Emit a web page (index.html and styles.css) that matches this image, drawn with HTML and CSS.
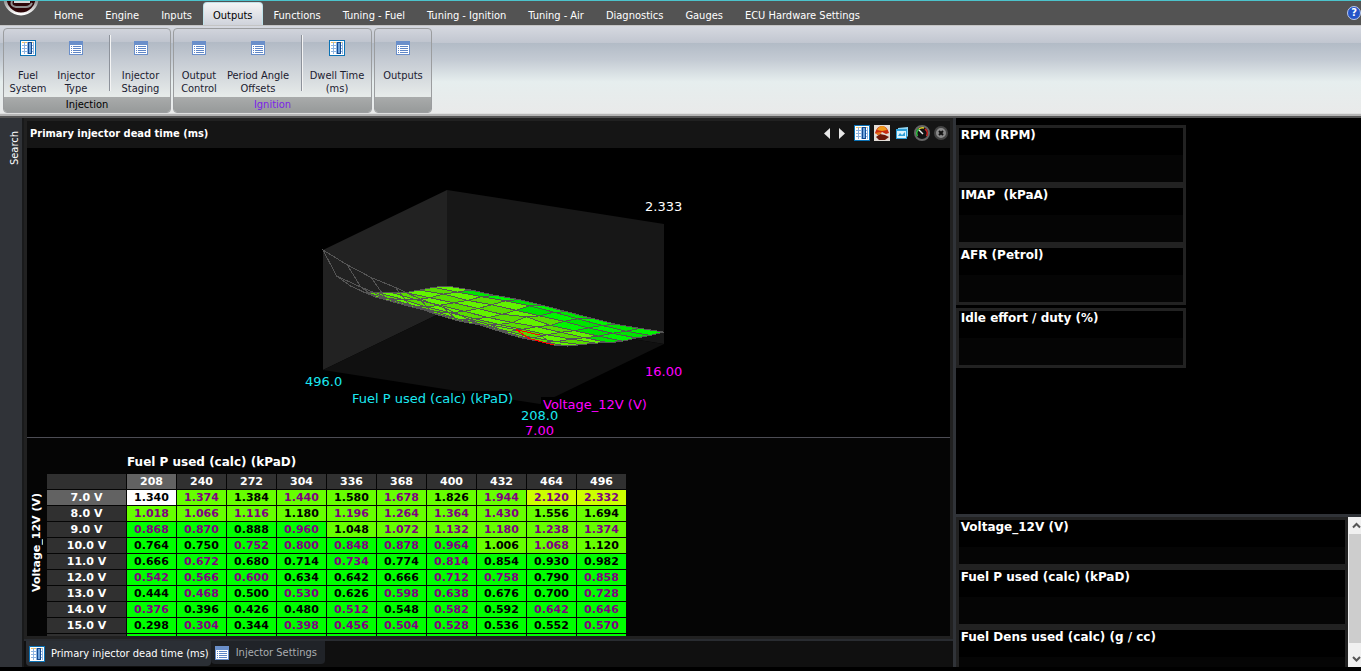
FILE: index.html
```
<!DOCTYPE html>
<html lang="en">
<head>
  <meta charset="UTF-8">
  <title>Primary injector dead time (ms)</title>
  <link rel="stylesheet" href="styles.css">
</head>
<body>
  <svg class="sprite" width="0" height="0">
    <symbol id="icon-table" viewBox="0 0 16 16">
      <rect x="0.5" y="0.5" width="15" height="15" fill="#fff" stroke="#0b72b5"/>
      <path d="M2 2.5h12" stroke="#f6c25c"/>
      <path d="M2 5.5h12M2 8.5h12M2 11.5h12M4.500 2v12M7.500 2v12M13.500 2v12" stroke="#8db4e2" fill="none"/>
      <rect x="8.5" y="2.5" width="3" height="11" fill="#6fa3dc" stroke="#12498f"/>
    </symbol>
    <symbol id="icon-list" viewBox="0 0 16 16">
      <rect x="1.5" y="1.5" width="13" height="13" fill="#fff" stroke="#6a8fca"/>
      <rect x="1" y="1" width="14" height="4" fill="#6a8fca"/>
      <path d="M3 6.5h1M3 8.5h1M3 10.5h1M3 12.5h1M5 6.5h8M5 8.5h8M5 10.5h8M5 12.5h8" stroke="#5f86c6"/>
    </symbol>
  </svg>

  <header class="topbar">
    <svg class="logo" width="43" height="18" viewBox="0 0 43 18">
      <defs>
        <linearGradient id="ring" x1="0" y1="0" x2="0" y2="1">
          <stop offset="0.5" stop-color="#777"/><stop offset="1" stop-color="#fff"/>
        </linearGradient>
      </defs>
      <circle cx="21" cy="-3" r="16" fill="#2c0507" stroke="url(#ring)" stroke-width="3"/>
      <path d="M12 0q-2 5 4 6h10q4 0 6-4" fill="none" stroke="#8e8e8e" stroke-width="2"/>
      <path d="M14 1h16" stroke="#d5d5d5" stroke-width="2"/>
    </svg>
    <nav class="tabs">
      <button>Home</button>
      <button>Engine</button>
      <button>Inputs</button>
      <button class="active">Outputs</button>
      <button>Functions</button>
      <button>Tuning - Fuel</button>
      <button>Tuning - Ignition</button>
      <button>Tuning - Air</button>
      <button>Diagnostics</button>
      <button>Gauges</button>
      <button>ECU Hardware Settings</button>
    </nav>
    <button class="help" aria-label="Help">?</button>
  </header>

  <div class="ribbon">
    <section class="group">
      <div class="items">
        <button class="narrow"><svg><use href="#icon-table"/></svg>Fuel<br>System</button>
        <button class="narrow"><svg><use href="#icon-list"/></svg>Injector<br>Type</button>
        <i class="sep"></i>
        <button><svg><use href="#icon-list"/></svg>Injector<br>Staging</button>
      </div>
      <h2>Injection</h2>
    </section>
    <section class="group">
      <div class="items">
        <button class="medium"><svg><use href="#icon-list"/></svg>Output<br>Control</button>
        <button class="wide"><svg><use href="#icon-list"/></svg>Period Angle<br>Offsets</button>
        <i class="sep"></i>
        <button class="wide"><svg><use href="#icon-table"/></svg>Dwell Time<br>(ms)</button>
      </div>
      <h2 class="purple">Ignition</h2>
    </section>
    <section class="group">
      <div class="items">
        <button class="single"><svg><use href="#icon-list"/></svg>Outputs</button>
      </div>
      <h2></h2>
    </section>
  </div>

  <div class="workspace">
    <aside class="side"><button>Search</button></aside>

    <main class="editor">
      <div class="panel">
        <div class="panel-head">
          <h1>Primary injector dead time (ms)</h1>
          <div class="tools">
            <button class="arrow" aria-label="Previous"><svg width="6" height="11" viewBox="0 0 6 11"><path d="M6 0v11L0 5.500z" fill="#e8e8e8"/></svg></button>
            <button class="arrow" aria-label="Next"><svg width="6" height="11" viewBox="0 0 6 11"><path d="M0 0v11l6-5.500z" fill="#e8e8e8"/></svg></button>
            <button aria-label="Table"><svg width="16" height="16"><use href="#icon-table"/></svg></button>
            <button aria-label="Surface">
              <svg width="16" height="16" viewBox="0 0 16 16">
                <rect width="16" height="16" fill="#e4ded8"/>
                <path d="M1 8Q3 1 8 1t7 7l-3 1-4-2-4 3z" fill="#c92a10"/>
                <path d="M3 5Q5 1 8 1t5 4l-5 1z" fill="#ef9a1a"/>
                <path d="M2 12l4-3 5 1 4 2-4 3H5z" fill="#6d1709"/>
                <path d="M1 8l3 2 4-2-2-1z" fill="#e8741a"/>
              </svg>
            </button>
            <button aria-label="Windows">
              <svg width="16" height="16" viewBox="0 0 16 16">
                <path d="M4 3l10-1v9l-1 1H4z" fill="#8fd6f4"/>
                <rect x="2.500" y="4.500" width="10" height="9" fill="#d9f2fc" stroke="#2d9fd8"/>
                <path d="M2 5h11" stroke="#2d9fd8" stroke-width="2"/>
                <path d="M4 11l2-3 2 2 3-3v4z" fill="#2d9fd8"/>
              </svg>
            </button>
            <button aria-label="Gauge">
              <svg width="16" height="16" viewBox="0 0 16 16">
                <circle cx="8" cy="8" r="7" fill="#111" stroke="#666" stroke-width="2"/>
                <path d="M3.500 11A5 5 0 0 1 5 4" stroke="#2fc040" fill="none" stroke-width="1.500"/>
                <path d="M5 4a5 5 0 0 1 5-1" stroke="#e0d030" fill="none" stroke-width="1.500"/>
                <path d="M11 4a5 5 0 0 1 1.500 7" stroke="#d02020" fill="none" stroke-width="1.500"/>
                <path d="M9 9L5 5" stroke="#eee" stroke-width="1.500"/>
              </svg>
            </button>
            <button aria-label="Close">
              <svg width="14" height="14" viewBox="0 0 14 14">
                <circle cx="7" cy="7" r="6" fill="#8a8a8a" stroke="#444" stroke-width="2"/>
                <path d="M5 5l4 4M9 5l-4 4" stroke="#111" stroke-width="2"/>
              </svg>
            </button>
          </div>
        </div>

        <div class="plot">
          <svg id="surface" width="396" height="288" viewBox="290 149 396 288">
            <polygon points="323,250 447,190 447,310 323,370" fill="#222"/>
            <polygon points="447,190 664,224 664,344 447,310" fill="#171717"/>
            <polygon points="323,370 447,310 664,344 540,404" fill="#101010"/>
            <g id="mesh" shape-rendering="crispEdges"></g>
            <path d="M350 391h160v18H350zM541 397h110v16H541z" fill="#000"/>
            <text x="645" y="211" class="z">2.333</text>
            <text x="645" y="376" class="y">16.00</text>
            <text x="305" y="386" class="x">496.0</text>
            <text x="352" y="403" class="x">Fuel P used (calc) (kPaD)</text>
            <text x="543" y="409" class="y">Voltage_12V (V)</text>
            <text x="521" y="420" class="x">208.0</text>
            <text x="525" y="435" class="y">7.00</text>
          </svg>
        </div>

        <div class="map">
          <div class="map-y">Voltage_12V (V)</div>
          <table>
            <caption>Fuel P used (calc) (kPaD)</caption>
            <thead><tr id="map-head"></tr></thead>
            <tbody id="map-body"></tbody>
          </table>
        </div>
      </div>

      <div class="doc-tabs">
        <button class="active"><svg><use href="#icon-table"/></svg>Primary injector dead time (ms)</button>
        <button><svg><use href="#icon-list"/></svg>Injector Settings</button>
      </div>
    </main>

    <aside class="gauges">
      <div class="gauge-top">
        <div class="gauge">RPM (RPM)</div>
        <div class="gauge">IMAP  (kPaA)</div>
        <div class="gauge">AFR (Petrol)</div>
        <div class="gauge apart">Idle effort / duty (%)</div>
      </div>
      <div class="gauge-bottom">
        <div class="gauge-list">
          <div class="gauge short">Voltage_12V (V)</div>
          <div class="gauge">Fuel P used (calc) (kPaD)</div>
          <div class="gauge">Fuel Dens used (calc) (g / cc)</div>
        </div>
        <div class="scroll">
          <svg width="9" height="17" viewBox="0 0 9 17"><path d="M1 10.500l3.500-3.500L8 10.500" fill="none" stroke="#555" stroke-width="2"/></svg>
          <div class="thumb"></div>
          <svg width="9" height="24" viewBox="0 0 9 24"><path d="M1 14l3.500 3.500L8 14" fill="none" stroke="#555" stroke-width="2"/></svg>
        </div>
      </div>
    </aside>
  </div>

  <script src="script.js"></script>
</body>
</html>
```
FILE: styles.css
```
* { box-sizing: border-box; }
body { margin: 0; height: 100vh; display: flex; flex-direction: column; overflow: hidden; background: #000; color: #fff; font: 11px/13px "DejaVu Sans Condensed", "DejaVu Sans", sans-serif; }
button { margin: 0; padding: 0; border: none; background: none; color: inherit; font: inherit; }
h1, h2 { margin: 0; font: inherit; }
.sprite { position: absolute; }

/* top menu */
.topbar { display: flex; height: 25px; flex: none; background: #535353; border-top: 1px solid #4cc3cc; }
.logo { flex: none; }
.tabs { display: flex; align-items: flex-end; flex: 1; }
.tabs button { height: 23px; padding: 3px 11px 0; white-space: nowrap; }
.tabs .active { padding: 2px 9px 0; border: 1px solid #bfe3ea; border-bottom: none; border-radius: 4px 4px 0 0; background: linear-gradient(#f4f4f4, #cfd3db); color: #000; }
.help { width: 14px; height: 14px; margin: 5px 0 0; border: 1px solid #b8c8ee; border-radius: 50%; background: #2454c8; color: #fff; font-weight: bold; line-height: 12px; }

/* ribbon */
.ribbon { display: flex; gap: 2px; height: 93px; flex: none; padding: 2px 3px 3px; border-top: 1px solid #c4c4c4; border-bottom: 2px solid #555; background: linear-gradient(#d6d9e0, #c1c6d0 19%, #b2bbc6 19%, #c3cad3 37%, #e6eeee 62%, #e9eaea 97%, #b5b5b5 98%); }
.group { display: flex; flex-direction: column; border: 1px solid #9b9d9f; border-radius: 4px; background: linear-gradient(#d1d4dc, #bfc4ce 16%, #b2bac5 16%, #c5cbd3 38%, #e6eae9 80%); color: #1b2030; overflow: hidden; }
.items { display: flex; flex: 1; }
.items button { width: 59px; padding-top: 11px; display: flex; flex-direction: column; align-items: center; }
.items .narrow { width: 48px; }
.items .medium { width: 50px; }
.items .single { width: 56px; }
.items .wide { width: 68px; }
.items svg { width: 16px; height: 16px; margin-bottom: 13px; }
.sep { width: 2px; margin: 6px 0 6px 9px; border-left: 1px solid #8d929b; background: #f4f4f4; }
.group h2 { height: 15px; text-align: center; background: linear-gradient(#a9abab, #979a9a); color: #000; line-height: 16px; }
.group .purple { color: #7b22e8; }

/* workspace */
.workspace { display: flex; flex: 1; min-height: 0; padding-bottom: 4px; }
.side { width: 24px; flex: none; padding-top: 9px; background: #303338; border-right: 2px solid #191a1b; }
.side button { width: 18px; height: 43px; margin-left: 5px; writing-mode: vertical-rl; transform: rotate(180deg); }
.editor { display: flex; flex-direction: column; flex: 1; min-width: 0; }
.panel { display: flex; flex-direction: column; flex: 1; min-height: 0; border: 3px solid #212121; background: #050505; }
.panel-head { display: flex; align-items: center; justify-content: space-between; height: 27px; flex: none; padding: 0 2px 3px 3px; background: #151515; }
.panel-head h1 { font-size: 11px; font-weight: bold; }
.tools { display: flex; align-items: center; gap: 4px; }
.tools button { display: flex; }
.tools .arrow { margin-right: 5px; }
.plot { height: 290px; flex: none; padding-top: 1px; border-bottom: 1px solid #4c4c54; background: #000; }
.plot svg { display: block; margin: auto; font: 13px "DejaVu Sans", sans-serif; }
.x { fill: #1be9f2; }
.y { fill: #f0f; }
.z { fill: #fff; }

/* fuel map */
.map { display: flex; flex: 1; min-height: 0; padding-top: 17px; overflow: hidden; font: bold 11px/15px "DejaVu Sans", sans-serif; }
.map-y { width: 19px; height: 177px; padding-bottom: 38px; text-align: right; line-height: 19px; writing-mode: vertical-rl; transform: rotate(180deg); }
table { border-spacing: 1px; table-layout: fixed; width: 581px; height: 0; }
caption { height: 18px; padding-left: 81px; text-align: left; font-size: 12px; }
th, td { height: 15px; padding: 0; text-align: center; line-height: 14px; }
th { background: #303030; }
th:first-child { width: 79px; }
th.on { background: #626262; }
td { background: #0f0; color: #000; }
td.mid { background: #6f0; }
td.high { background: #cf0; }
td.edited { color: #800080; }
td.cursor { background: #fff; }

.doc-tabs { display: flex; height: 28px; flex: none; border-top: 2px solid #292c31; background: #101010; padding-left: 2px; }
.doc-tabs button { display: flex; align-items: center; gap: 6px; height: 23px; padding: 0 8px 0 3px; background: #202328; color: #aaadb0; border-radius: 0 0 4px 4px; }
.doc-tabs .active { height: 25px; padding-right: 2px; background: #2b2f35; color: #fff; }
.doc-tabs svg { width: 16px; height: 16px; }

/* gauges */
.gauges { display: flex; flex-direction: column; width: 30%; flex: none; border-left: 3px solid #303338; font: bold 12px/14px "DejaVu Sans", sans-serif; }
.gauge-top { flex: 1; padding: 7px 0 0; }
.gauge { height: 60px; padding-left: 2px; border: 3px solid #222; background: linear-gradient(#000 27px, #050505 27px); white-space: pre; }
.gauge-top .gauge { width: 230px; }
.gauge-top .apart { margin-top: 3px; }
.gauge-bottom { display: flex; height: 153px; flex: none; border-top: 3px solid #303338; }
.gauge-list { flex: 1; overflow: hidden; }
.short { height: 50px; }
.scroll { display: flex; flex-direction: column; width: 13px; background: #f0f0f0; align-items: flex-end; }
.thumb { flex: 1; width: 12px; background: #cdcdcd; }
```
FILE: script.js
```
const pressures = [208, 240, 272, 304, 336, 368, 400, 432, 464, 496]

// * marks an edited cell
const rows = [
  "1.340 *1.374 1.384 *1.440 1.580 *1.678 1.826 *1.944 *2.120 *2.332",
  "*1.018 *1.066 *1.116 1.180 *1.196 *1.264 *1.364 *1.430 1.556 1.694",
  "*0.868 *0.870 0.888 *0.960 1.048 *1.072 *1.132 *1.180 *1.238 *1.374",
  "0.764 0.750 *0.752 *0.800 *0.848 *0.878 *0.964 1.006 *1.068 1.120",
  "0.666 *0.672 0.680 0.714 *0.734 0.774 *0.814 0.854 0.930 0.982",
  "*0.542 *0.566 *0.600 0.634 0.642 0.666 *0.712 *0.758 0.790 *0.858",
  "0.444 *0.468 0.500 *0.530 0.626 *0.598 *0.638 0.676 0.700 *0.728",
  "*0.376 0.396 0.426 0.480 *0.512 0.548 *0.582 0.592 *0.642 *0.646",
  "0.298 *0.304 0.344 *0.398 *0.456 *0.504 *0.528 0.536 0.552 *0.570",
  "0.230 0.232 0.236 0.280 0.330 0.380 0.424 0.430 0.462 0.466"
].map(r => r.split(" "))

document.getElementById("map-head").innerHTML = "<th></th>" +
  pressures.map((p, i) => `<th class="${i ? "" : "on"}">${p}</th>`).join("")

document.getElementById("map-body").innerHTML = rows.map((row, r) => {
  const cells = row.map((text, c) => {
    const value = parseFloat(text.replace("*", ""))
    let cls = value >= 2 ? "high" : value >= 1 ? "mid" : ""
    if (text[0] === "*") cls += " edited"
    if (r === 0 && c === 0) cls = "cursor"
    return `<td class="${cls}">${text.replace("*", "")}</td>`
  }).join("")
  return `<tr><th class="${r ? "" : "on"}">${r + 7}.0 V</th>${cells}</tr>`
}).join("")

// 3D surface
const z = rows.map(row => row.map(t => parseFloat(t.replace("*", ""))))

function point(r, c) {
  return [540 - c * 217 / 9 + r * 124 / 9, 404 - c * 34 / 9 - r * 60 / 9 - z[r][c] * 120 / 2.333]
}

let mesh = ""
for (let r = 8; r >= 0; r--) {
  for (let c = 8; c >= 0; c--) {
    const p = [point(r, c), point(r, c + 1), point(r + 1, c + 1), point(r + 1, c)]
    let area = 0
    p.forEach((a, i) => {
      const b = p[(i + 1) % 4]
      area += a[0] * b[1] - b[0] * a[1]
    })
    const low = Math.min(z[r][c], z[r][c + 1], z[r + 1][c], z[r + 1][c + 1])
    let fill = "none"
    if (area > 0) fill = low < 0.46 ? ((r + c) % 2 ? "#00e400" : "#00f500") : ((r + c) % 2 ? "#58dc00" : "#62f400")
    mesh += `<polygon points="${p.join(" ")}" fill="${fill}" stroke="#555"/>`
  }
}
const cursor = [point(0, 0), point(0, 1), point(1, 1), point(1, 0)]
mesh += `<polyline points="${cursor.join(" ")}" fill="none" stroke="#f00"/>`
document.getElementById("mesh").innerHTML = mesh
```
